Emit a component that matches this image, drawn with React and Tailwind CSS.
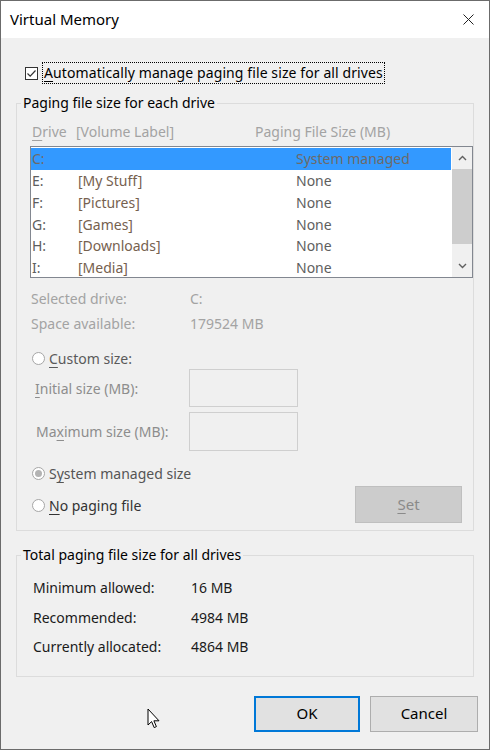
import React from 'react';

const drives = [
  { d: 'C:', label: '', size: 'System managed', sel: true },
  { d: 'E:', label: '[My Stuff]', size: 'None' },
  { d: 'F:', label: '[Pictures]', size: 'None' },
  { d: 'G:', label: '[Games]', size: 'None' },
  { d: 'H:', label: '[Downloads]', size: 'None' },
  { d: 'I:', label: '[Media]', size: 'None' },
];

function U({ children }) {
  return <span className="underline decoration-1 underline-offset-[3px]">{children}</span>;
}

function Radio({ checked }) {
  return (
    <span className="w-[13px] h-[13px] rounded-full border border-[#a6a6a6] bg-white flex items-center justify-center shrink-0">
      {checked && <span className="w-[7px] h-[7px] rounded-full bg-[#b3b3b3]" />}
    </span>
  );
}

function Chevron({ up }) {
  return (
    <svg width="9" height="6" viewBox="0 0 9 6">
      <path d={up ? 'M1 5 L4.5 1.5 L8 5' : 'M1 1 L4.5 4.5 L8 1'} fill="none" stroke="#606060" strokeWidth="1.4" />
    </svg>
  );
}

export default function App() {
  return (
    <div className="w-[490px] h-[750px] border border-[#6b6b6b] bg-[#f0f0f0] flex flex-col relative overflow-hidden font-['Noto_Sans',sans-serif] text-[14px] text-black select-none">
      {/* title bar */}
      <div className="h-[37px] bg-white flex items-center justify-between pl-[9px] pr-[15px] shrink-0">
        <span className="text-[15px]">Virtual Memory</span>
        <svg width="11" height="11" viewBox="0 0 11 11">
          <path d="M0.5 0.5 L10.5 10.5 M10.5 0.5 L0.5 10.5" stroke="#222" strokeWidth="1" />
        </svg>
      </div>

      <div className="px-[15px] flex flex-col">
        {/* auto manage */}
        <div className="mt-[24px] h-[22px] flex items-center pl-[9px]">
          <span className="w-[13px] h-[13px] border border-[#333] bg-white flex items-center justify-center shrink-0">
            <svg width="11" height="11" viewBox="0 0 11 11">
              <path d="M1.5 5.5 L4.2 8.2 L9.5 2.5" fill="none" stroke="#333" strokeWidth="1.2" />
            </svg>
          </span>
          <span className="ml-[4px] border border-dotted border-black px-[1px] leading-[20px] tracking-[0.1px]">
            <U>A</U>utomatically manage paging file size for all drives
          </span>
        </div>

        {/* per drive group */}
        <fieldset className="mt-[10px] border border-[#dcdcdc] pl-[13px] pb-[7px]">
          <legend className="-ml-[9px] px-[2px] leading-[18px]">Paging file size for each drive</legend>
          <div className="mt-[9px] h-[20px] flex items-center pl-[2px] text-[#a3a3a3]">
            <span className="w-[44px]"><U>D</U>rive</span>
            <span className="w-[179px]">[Volume Label]</span>
            <span>Paging File Size (MB)</span>
          </div>

          <div className="mt-[5px] h-[132px] border border-[#828790] bg-white flex">
            <div className="flex-1 pt-[1px] pr-[1px]">
              {drives.map(r => (
                <div
                  key={r.d}
                  className={`h-[21.75px] flex items-center pl-[1px] ${r.sel ? 'bg-[#3399ff] text-[#6e6a68]' : 'text-[#5e5e5e]'}`}
                >
                  <span className="w-[46px]">{r.d}</span>
                  <span className={`w-[218px] ${r.sel ? '' : 'text-[#76614f]'}`}>{r.label}</span>
                  <span>{r.size}</span>
                </div>
              ))}
            </div>
            <div className="w-[20px] bg-[#f0f0f0] flex flex-col">
              <div className="h-[22px] flex items-center justify-center"><Chevron up /></div>
              <div className="h-[75px] bg-[#cdcdcd]" />
              <div className="flex-1" />
              <div className="h-[22px] flex items-center justify-center"><Chevron /></div>
            </div>
          </div>

          <div className="mt-[8px] h-[25px] flex items-center pl-[1px] text-[#a3a3a3]">
            <span className="w-[159px]">Selected drive:</span>
            <span>C:</span>
          </div>
          <div className="h-[25px] flex items-center pl-[1px] text-[#a3a3a3]">
            <span className="w-[159px]">Space available:</span>
            <span>179524 MB</span>
          </div>

          <div className="mt-[11px] h-[22px] flex items-center pl-[2px] text-[#5a5a5a]">
            <Radio />
            <span className="ml-[4px]"><U>C</U>ustom size:</span>
          </div>
          <div className="h-[38px] flex items-center">
            <span className="w-[159px] pl-[5px] text-[#8d8d8d]"><U>I</U>nitial size (MB):</span>
            <span className="w-[109px] h-[38px] border border-[#cfcfcf]" />
          </div>
          <div className="mt-[5px] h-[39px] flex items-center">
            <span className="w-[159px] pl-[6px] text-[#8d8d8d]">Ma<U>x</U>imum size (MB):</span>
            <span className="w-[109px] h-[39px] border border-[#cfcfcf]" />
          </div>

          <div className="mt-[11px] h-[23px] flex items-center pl-[2px] text-[#555]">
            <Radio checked />
            <span className="ml-[4px]">S<U>y</U>stem managed size</span>
          </div>
          <div className="mt-[1px] h-[37px] flex items-center justify-between pl-[2px]">
            <div className="flex items-center text-[#333] pt-[2px]">
              <Radio />
              <span className="ml-[4px]"><U>N</U>o paging file</span>
            </div>
            <div className="mr-[11px] w-[107px] h-[37px] bg-[#cccccc] border border-[#bfbfbf] flex items-center justify-center text-[#8a8a8a] text-[15px]">
              <U>S</U>et
            </div>
          </div>
        </fieldset>

        {/* totals group */}
        <fieldset className="mt-[15px] border border-[#dcdcdc] pl-[16px] pb-[14px]">
          <legend className="-ml-[12px] px-[2px] leading-[18px]">Total paging file size for all drives</legend>
          <div className="mt-[9px]">
            {[
              ['Minimum allowed:', '16 MB'],
              ['Recommended:', '4984 MB'],
              ['Currently allocated:', '4864 MB'],
            ].map(([k, v]) => (
              <div key={k} className="h-[29.5px] flex items-center text-[#1a1a1a]">
                <span className="w-[158px]">{k}</span>
                <span>{v}</span>
              </div>
            ))}
          </div>
        </fieldset>
      </div>

      {/* buttons */}
      <div className="mt-[19px] flex justify-end gap-[10px] pr-[11px]">
        <div className="w-[106px] h-[36px] bg-[#e1e1e1] border-2 border-[#0078d7] flex items-center justify-center text-[15px]">OK</div>
        <div className="w-[108px] h-[36px] bg-[#e1e1e1] border border-[#adadad] flex items-center justify-center text-[15px]">Cancel</div>
      </div>

      {/* mouse pointer */}
      <svg className="absolute left-[146px] top-[707px]" width="14" height="22" viewBox="0 0 14 22">
        <path d="M1 1 L1 17 L4.6 13.6 L7.2 19.6 L9.4 18.6 L6.9 12.8 L12 12.8 Z" fill="#fff" stroke="#000" strokeWidth="1" strokeLinejoin="round" />
      </svg>
    </div>
  );
}
